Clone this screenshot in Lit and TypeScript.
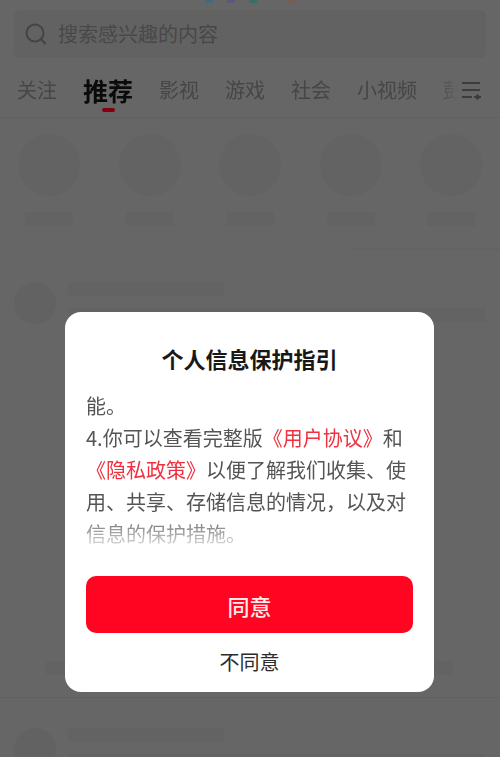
import { LitElement, html, css } from "lit";
import { customElement, state } from "lit/decorators.js";

const TABS = ["关注", "推荐", "影视", "游戏", "社会", "小视频", "彭"];

@customElement("app-root")
export class AppRoot extends LitElement {
  @state() private active = 1;

  static styles = css`
    :host {
      display: block;
      position: relative;
      min-height: 100vh;
      overflow: hidden;
      background: #666;
      color: #464646;
      font-family: "Noto Sans CJK SC", "Noto Sans", sans-serif;
      font-size: 20px;
      line-height: 32px;
    }
    * { box-sizing: border-box; }
    button {
      border: 0;
      padding: 0;
      background: none;
      color: inherit;
      font: inherit;
      white-space: nowrap;
      cursor: pointer;
    }
    .feed {
      height: 100vh;
      overflow: hidden;
    }
    .status {
      height: 10px;
      overflow: hidden;
      display: flex;
      justify-content: center;
      gap: 14px;
    }
    .tick { width: 8px; height: 3px; background: #48687a; }
    .tick.violet { background: #5c5a7c; }
    .tick.green { background: #3c6e68; }
    .tick.brown { margin-left: 16px; background: #745e54; }
    .search {
      display: flex;
      align-items: center;
      gap: 10px;
      height: 48px;
      margin: 0 14px;
      padding: 0 10px;
      border-radius: 6px;
      background: #626262;
    }
    .search svg { flex: none; }
    .search input {
      flex: 1;
      min-width: 0;
      border: 0;
      padding: 0;
      outline: 0;
      background: none;
      color: #434343;
      font: inherit;
    }
    .search input::placeholder { color: #484848; opacity: 1; }
    .bar {
      display: flex;
      height: 60px;
      padding: 0 18px 0 17px;
      border-bottom: 1px solid #606060;
    }
    .tabs {
      flex: 1;
      min-width: 0;
      display: flex;
      gap: 26px;
      overflow: hidden;
      -webkit-mask-image: linear-gradient(to right, #000 calc(100% - 24px), transparent calc(100% - 4px));
      mask-image: linear-gradient(to right, #000 calc(100% - 24px), transparent calc(100% - 4px));
    }
    .tab { position: relative; flex: none; height: 64px; }
    .tab.active { font-size: 25px; font-weight: 700; color: #0a0a0a; }
    .tab.active::after {
      content: "";
      position: absolute;
      left: calc(50% - 6px);
      top: 50px;
      width: 13px;
      height: 4px;
      border-radius: 2px;
      background: #85000f;
    }
    .manage { flex: none; width: 20px; height: 64px; display: flex; align-items: center; }
    .stories {
      display: flex;
      justify-content: space-between;
      padding: 16px 18px 0;
    }
    .story { display: flex; flex-direction: column; align-items: center; gap: 16px; }
    .disc { width: 62px; height: 62px; border-radius: 50%; background: #636363; }
    .label { width: 48px; height: 14px; border-radius: 2px; background: #636363; }
    .rule { height: 2px; margin: 22px 0 32px 352px; background: #636363; }
    .post {
      display: flex;
      flex-direction: column;
      justify-content: space-between;
      height: 416px;
      padding: 0 14px 22px;
      border-bottom: 1px solid #616161;
    }
    .post + .post { margin-top: 30px; }
    .head { display: flex; gap: 12px; }
    .foot { display: flex; justify-content: space-between; padding: 0 32px; }
    .avatar { flex: none; width: 42px; height: 42px; border-radius: 50%; background: #626262; }
    .lines { flex: 1; }
    .line { height: 14px; background: #636363; }
    .line.short { width: 156px; margin-bottom: 12px; }
    .scrim {
      position: absolute;
      inset: 0;
      display: flex;
      justify-content: center;
      align-items: flex-start;
      padding: 312px 66px 0 65px;
    }
    .dialog {
      width: 100%;
      max-width: 480px;
      padding: 30px 21px 12px;
      border-radius: 16px;
      background: #fff;
      color: #555;
      display: flex;
      flex-direction: column;
    }
    h1 {
      margin: 0 0 16px;
      color: #181818;
      font-size: 22px;
      font-weight: 700;
      line-height: 32px;
      text-align: center;
    }
    .terms {
      margin: 0;
      height: 160px;
      overflow: hidden;
      line-height: 32px;
      -webkit-mask-image: linear-gradient(#000 124px, transparent 164px);
      mask-image: linear-gradient(#000 124px, transparent 164px);
    }
    .terms p { margin: 0; }
    .terms a { color: #f0303e; text-decoration: none; }
    .agree {
      height: 57px;
      margin-top: 26px;
      border-radius: 10px;
      background: #ff0521;
      color: #ffe8ea;
      font-size: 22px;
      font-weight: 500;
    }
    .decline { height: 36px; margin-top: 11px; color: #2c2c2c; }
  `;

  render() {
    return html`
      <main class="feed">
        <div class="status">
          <i class="tick"></i><i class="tick violet"></i><i class="tick green"></i><i class="tick brown"></i>
        </div>
        <label class="search">
          <svg width="24" height="24" viewBox="0 0 24 24" fill="none" stroke="#444" stroke-width="2" stroke-linecap="round">
            <circle cx="11" cy="11" r="8.5" /><path d="M17 17l4 4.500" />
          </svg>
          <input type="search" placeholder="搜索感兴趣的内容" aria-label="搜索" />
        </label>
        <nav class="bar">
          <div class="tabs">
            ${TABS.map((t, i) => html`<button class="tab ${i === this.active ? "active" : ""}"
              @click=${() => (this.active = i)}>${t}</button>`)}
          </div>
          <button class="manage" aria-label="频道管理">
            <svg width="20" height="20" viewBox="0 0 20 20" fill="none" stroke="#3c3c3c" stroke-width="2">
              <path d="M0 3h18M0 10h18M0 17h10M12 17h7" />
              <path d="M15.500 14l3 3-3 3-3-3z" fill="#3c3c3c" stroke="none" />
            </svg>
          </button>
        </nav>
        <section class="stories">
          ${[0, 1, 2, 3, 4].map(() => html`<div class="story"><div class="disc"></div><div class="label"></div></div>`)}
        </section>
        <div class="rule"></div>
        ${[0, 1].map(() => html`<article class="post">
          <div class="head">
            <div class="avatar"></div>
            <div class="lines"><div class="line short"></div><div class="line"></div></div>
          </div>
          <div class="foot"><div class="label"></div><div class="label"></div></div>
        </article>`)}
      </main>
      <div class="scrim">
        <section class="dialog" role="dialog" aria-modal="true" aria-labelledby="title">
          <h1 id="title">个人信息保护指引</h1>
          <div class="terms">
            <p>能。</p>
            <p>4.你可以查看完整版<a href="#agreement">《用户协议》</a>和<a href="#privacy">《隐私政策》</a>以便了解我们收集、使用、共享、存储信息的情况，以及对信息的保护措施。</p>
          </div>
          <button class="agree">同意</button>
          <button class="decline">不同意</button>
        </section>
      </div>
    `;
  }
}
